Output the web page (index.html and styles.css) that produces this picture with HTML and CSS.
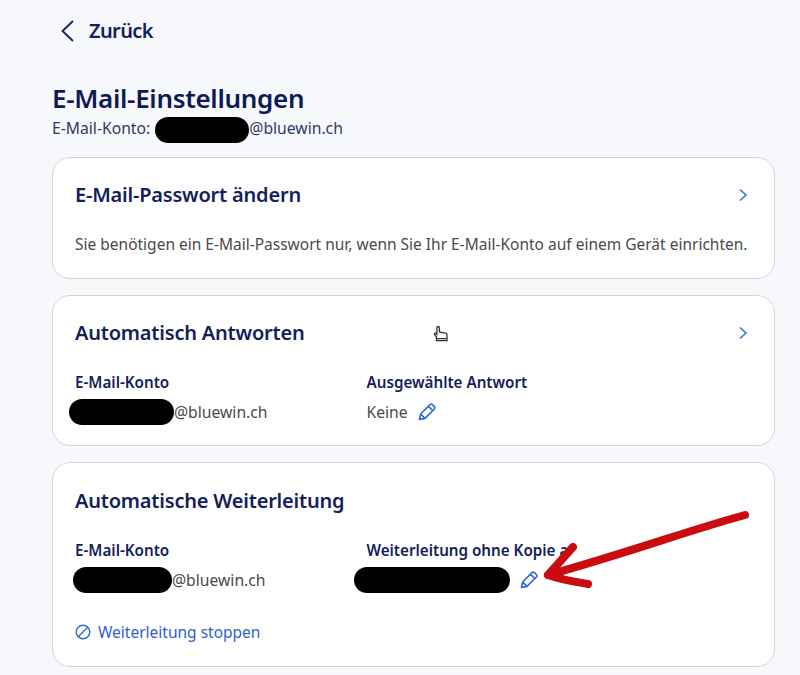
FILE: index.html
```html
<!DOCTYPE html>
<html lang="de">
<head>
    <meta charset="UTF-8">
    <meta name="viewport" content="width=device-width, initial-scale=1.0">
    <title>E-Mail-Einstellungen</title>
    <link rel="stylesheet" href="styles.css">
</head>
<body>
    <a class="back-link" href="#">
        <svg class="back-icon" width="16" height="24" viewBox="0 0 16 24"><path d="M14 2 3.5 12 14 22" fill="none" stroke="#1b2a63" stroke-width="2"/></svg>
        <span>Zurück</span>
    </a>

    <h1 class="page-title">E-Mail-Einstellungen</h1>
    <p class="account-line">E-Mail-Konto: <span class="blob blob-title"></span>@bluewin.ch</p>

    <section class="card card-password">
        <div class="card-head">
            <h2>E-Mail-Passwort ändern</h2>
            <svg class="chevron" width="10" height="14" viewBox="0 0 10 14"><path d="M2 1.5 8 7 2 12.5" fill="none" stroke="#3f6fd8" stroke-width="1.6"/></svg>
        </div>
        <p class="card-text">Sie benötigen ein E-Mail-Passwort nur, wenn Sie Ihr E-Mail-Konto auf einem Gerät einrichten.</p>
    </section>

    <section class="card card-reply">
        <div class="card-head">
            <h2>Automatisch Antworten</h2>
            <svg class="chevron" width="10" height="14" viewBox="0 0 10 14"><path d="M2 1.5 8 7 2 12.5" fill="none" stroke="#3f6fd8" stroke-width="1.6"/></svg>
        </div>
        <div class="columns">
            <div>
                <h3>E-Mail-Konto</h3>
                <div class="value"><span class="blob blob-reply"></span>@bluewin.ch</div>
            </div>
            <div>
                <h3>Ausgewählte Antwort</h3>
                <div class="value">Keine
                    <svg class="pencil" width="20" height="20" viewBox="0 0 20 20"><path d="M2.500 17.500 3.600 12 13 2.600a1.800 1.800 0 0 1 2.500 0l1.900 1.900a1.800 1.800 0 0 1 0 2.500L8 16.400ZM3.600 12 8 16.400M11.400 4.200l4.400 4.400" fill="none" stroke="#2f66d9" stroke-width="1.600" stroke-linejoin="round"/></svg>
                </div>
            </div>
        </div>
    </section>

    <section class="card card-forward">
        <h2>Automatische Weiterleitung</h2>
        <div class="columns">
            <div>
                <h3>E-Mail-Konto</h3>
                <div class="value"><span class="blob blob-forward"></span>@bluewin.ch</div>
            </div>
            <div>
                <h3>Weiterleitung ohne Kopie a</h3>
                <div class="value value-target"><span class="blob blob-target"></span>
                    <svg class="pencil" width="20" height="20" viewBox="0 0 20 20"><path d="M2.500 17.500 3.600 12 13 2.600a1.800 1.800 0 0 1 2.500 0l1.900 1.900a1.800 1.800 0 0 1 0 2.500L8 16.400ZM3.600 12 8 16.400M11.400 4.200l4.400 4.400" fill="none" stroke="#2f66d9" stroke-width="1.600" stroke-linejoin="round"/></svg>
                </div>
            </div>
        </div>
        <a class="stop-link" href="#">
            <svg width="16" height="16" viewBox="0 0 16 16"><circle cx="8" cy="8" r="6.800" fill="none" stroke="#2f66d9" stroke-width="1.400"/><path d="M3.300 12.700 12.700 3.300" stroke="#2f66d9" stroke-width="1.400"/></svg>
            Weiterleitung stoppen
        </a>
    </section>

    <!-- hand cursor from the screenshot -->
    <svg class="cursor" width="16" height="18" viewBox="0 0 16 18"><path d="M5 1.500c1 0 1.400.6 1.400 1.500v4l6 1.200c1 .2 1.600.8 1.600 1.800v5.500H3.500V12L1.500 9.500c-.6-1 .6-1.800 1.400-1.200l1 1V3c0-.9.300-1.500 1.100-1.500Z" fill="#fff" stroke="#333" stroke-width="1.300"/><path d="M3.500 13.500H14" stroke="#333" stroke-width="1"/></svg>

    <!-- red arrow drawn over the screenshot -->
    <svg class="arrow" width="210" height="90" viewBox="0 0 210 90"><path d="M205 5 C150 20 90 42 8 65" fill="none" stroke="#c90c10" stroke-width="8" stroke-linecap="round"/><path d="M33 37 8 65 C22 70 36 72 48 74" fill="none" stroke="#c90c10" stroke-width="8" stroke-linecap="round" stroke-linejoin="round"/></svg>
</body>
</html>
```
FILE: styles.css
```css
body {
    position: relative;
    margin: 0;
    padding: 0 25px 0 52px;
    height: 675px;
    box-sizing: border-box;
    overflow: hidden;
    background-color: #f7f8fb;
    font-family: "Noto Sans", sans-serif;
    color: #4a4a4a;
}
.back-link {
    display: flex;
    align-items: center;
    gap: 14px;
    padding: 18px 0 0 7px;
    height: 25px;
    font-size: 20px;
    font-weight: 600;
    letter-spacing: -0.6px;
    color: #13205c;
    text-decoration: none;
}
.page-title {
    margin: 38px 0 0;
    font-size: 26px;
    line-height: 34px;
    font-weight: 600;
    letter-spacing: -0.3px;
    color: #0e1a55;
}
.account-line {
    margin: 1px 0 14px;
    font-size: 15.700px;
    line-height: 24px;
    color: #2f3a63;
}
.blob {
    display: inline-block;
    height: 26px;
    vertical-align: middle;
    background: #000;
    border-radius: 13px;
}
.blob-title {
    width: 94px;
    margin: 0 0 0 1px;
}
.blob-reply {
    width: 105px;
    margin-left: -6px;
}
.blob-forward {
    width: 99px;
    margin-left: -2px;
}
.blob-target {
    width: 156px;
    margin-left: -13px;
}
.card {
    box-sizing: border-box;
    margin-bottom: 16px;
    padding: 23px 22px;
    background: #fff;
    border: 1px solid #d3d5d8;
    border-radius: 18px;
}
.card-password {
    height: 122px;
}
.card-reply {
    height: 151px;
}
.card-forward {
    height: 205px;
    padding-top: 24px;
}
.card-head {
    display: flex;
    justify-content: space-between;
    align-items: center;
}
.chevron {
    margin-right: 4px;
}
.card h2 {
    margin: 0;
    font-size: 20px;
    line-height: 28px;
    font-weight: 600;
    letter-spacing: -0.2px;
    color: #13205c;
}
.card-text {
    margin: 24px 0 0;
    font-size: 15.500px;
    line-height: 22px;
}
.columns {
    display: grid;
    grid-template-columns: 291.500px 1fr;
    margin-top: 25px;
}
.columns h3 {
    margin: 0;
    font-size: 15.200px;
    line-height: 20px;
    font-weight: 600;
    color: #13205c;
}
.value {
    display: flex;
    align-items: center;
    margin-top: 8px;
    height: 25px;
    font-size: 15.700px;
}
.pencil {
    margin-left: 9px;
}
.stop-link {
    display: flex;
    align-items: center;
    gap: 7px;
    margin-top: 28px;
    font-size: 15.500px;
    color: #2f5fd0;
    text-decoration: none;
}
.cursor {
    position: absolute;
    left: 433px;
    top: 325px;
}
.arrow {
    position: absolute;
    left: 540px;
    top: 510px;
}
```
